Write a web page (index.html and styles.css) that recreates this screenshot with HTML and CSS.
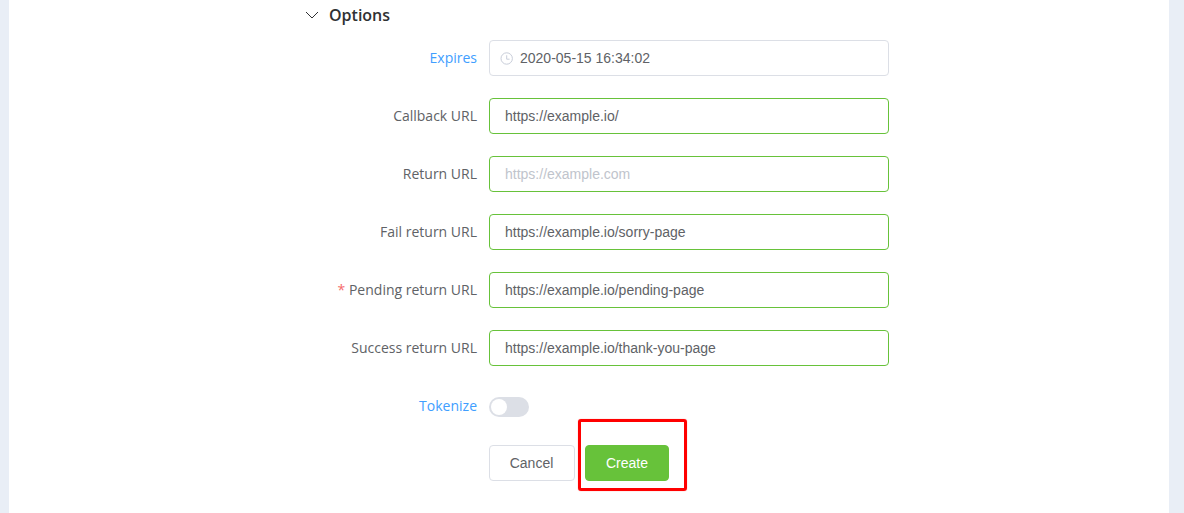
FILE: index.html
```html
<!DOCTYPE html>
<html lang="en">
<head>
<meta charset="utf-8">
<title>Options</title>
<link rel="stylesheet" href="styles.css">
</head>
<body>
<main class="panel">
  <div class="section-head">
    <svg class="chevron" width="14" height="14" viewBox="0 0 14 14"><path d="M1 4l6 6 6-6" fill="none" stroke="#303133" stroke-width="1"/></svg>
    <h2 class="section-title">Options</h2>
  </div>
  <form class="form">
    <div class="row">
      <label class="label label-blue">Expires</label>
      <div class="field field-date">
        <svg class="clock" width="14" height="14" viewBox="0 0 14 14"><circle cx="6.7" cy="7.5" r="5.7" fill="none" stroke="#c8cdd9" stroke-width="1"/><path d="M6.7 4.3V8.2H9.6" fill="none" stroke="#c8cdd9" stroke-width="1"/></svg>
        <span class="date-value">2020-05-15 16:34:02</span>
      </div>
    </div>
    <div class="row">
      <label class="label">Callback URL</label>
      <div class="field field-ok">https://example.io/</div>
    </div>
    <div class="row">
      <label class="label">Return URL</label>
      <div class="field field-ok placeholder">https://example.com</div>
    </div>
    <div class="row">
      <label class="label">Fail return URL</label>
      <div class="field field-ok">https://example.io/sorry-page</div>
    </div>
    <div class="row">
      <label class="label"><span class="star">*</span> Pending return URL</label>
      <div class="field field-ok">https://example.io/pending-page</div>
    </div>
    <div class="row">
      <label class="label">Success return URL</label>
      <div class="field field-ok">https://example.io/thank-you-page</div>
    </div>
    <div class="row">
      <label class="label label-blue">Tokenize</label>
      <div class="switch-wrap"><span class="switch"><span class="knob"></span></span></div>
    </div>
    <div class="actions">
      <button type="button" class="btn btn-plain">Cancel</button>
      <span class="highlight-wrap">
        <button type="button" class="btn btn-primary">Create</button>
        <span class="highlight"></span>
      </span>
    </div>
  </form>
</main>
</body>
</html>
```
FILE: styles.css
```css
html, body {
  margin: 0;
  padding: 0;
  height: 100%;
  overflow: hidden;
}
body {
  background: #e9eef6;
  font-family: "Liberation Sans", Arial, sans-serif;
}
.panel {
  box-sizing: border-box;
  margin-left: 9px;
  width: 1160px;
  height: 513px;
  background: #fff;
  padding-left: 296px;
}
.section-head {
  display: flex;
  align-items: center;
  height: 30px;
}
.chevron {
  margin-right: 10px;
  flex: none;
}
.section-title {
  margin: 0;
  font: 600 16px/30px "Open Sans", "Noto Sans", sans-serif;
  color: #303133;
}
.form {
  padding-top: 10px;
}
.row {
  display: flex;
  height: 36px;
  margin-bottom: 22px;
}
.label {
  box-sizing: border-box;
  width: 184px;
  padding-right: 12px;
  text-align: right;
  font: 14px/36px "Open Sans", "Noto Sans", sans-serif;
  color: #606266;
  white-space: nowrap;
}
.label-blue {
  color: #409eff;
}
.star {
  color: #f56c6c;
}
.field {
  box-sizing: border-box;
  width: 400px;
  height: 36px;
  padding: 0 15px;
  border: 1px solid #dcdfe6;
  border-radius: 4px;
  font-size: 14px;
  line-height: 34px;
  color: #606266;
  background: #fff;
}
.field-ok {
  border-color: #67c23a;
}
.placeholder {
  color: #c0c4cc;
}
.field-date {
  display: flex;
  align-items: center;
  padding-left: 10px;
}
.clock {
  flex: none;
  margin-right: 6px;
}
.switch-wrap {
  display: flex;
  align-items: center;
  height: 36px;
}
.switch {
  display: block;
  position: relative;
  width: 40px;
  height: 20px;
  border-radius: 10px;
  background: #dcdfe6;
  margin-top: 1px;
}
.knob {
  position: absolute;
  top: 2px;
  left: 2px;
  width: 16px;
  height: 16px;
  border-radius: 50%;
  background: #fff;
}
.actions {
  display: flex;
  padding-left: 184px;
  margin-top: -1px;
}
.btn {
  box-sizing: border-box;
  height: 36px;
  border-radius: 4px;
  font: 14px "Liberation Sans", Arial, sans-serif;
  padding: 0;
}
.btn-plain {
  width: 86px;
  background: #fff;
  border: 1px solid #dcdfe6;
  color: #606266;
  padding-right: 1px;
}
.btn-primary {
  display: block;
  width: 84px;
  background: #67c23a;
  border: 1px solid #67c23a;
  color: #fff;
}
.highlight-wrap {
  position: relative;
  display: block;
  margin-left: 10px;
}
.highlight {
  position: absolute;
  left: -7px;
  top: -26px;
  width: 103px;
  height: 66px;
  border: 3px solid #f00;
  border-radius: 3px;
  box-shadow: 0 0 1px rgba(255, 0, 0, 0.6);
}
```
